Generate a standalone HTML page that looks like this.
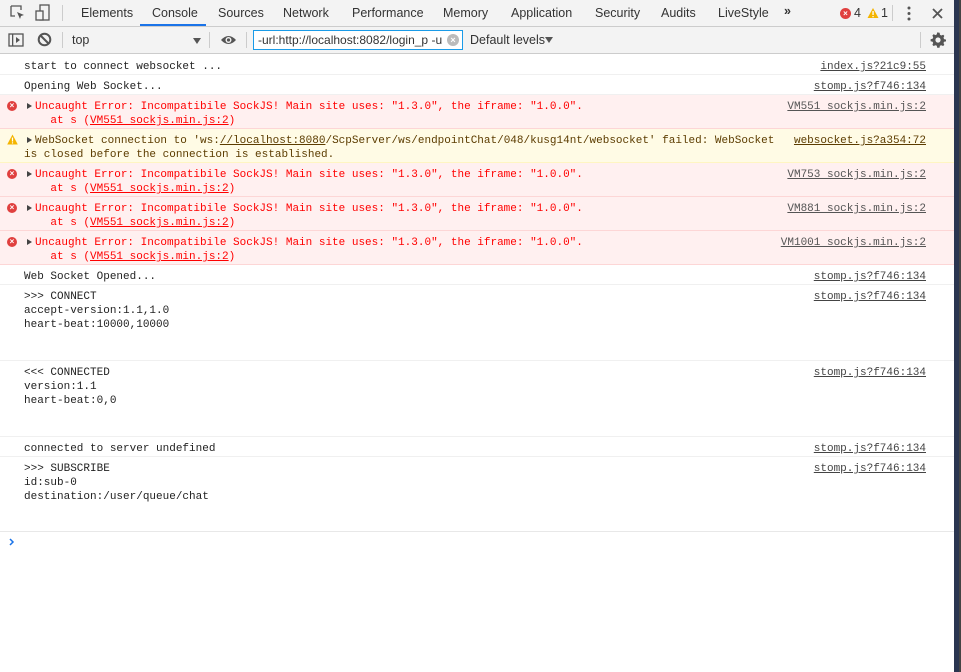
<!DOCTYPE html>
<html><head><style>
*{margin:0;padding:0;box-sizing:border-box}
body{width:961px;height:672px;overflow:hidden;background:#fff;position:relative;font-family:"Liberation Sans",sans-serif}
.tb1{position:absolute;left:0;top:0;width:954px;height:27px;background:#f3f3f3;border-bottom:1px solid #ccc}
.tb2{position:absolute;left:0;top:27px;width:954px;height:27px;background:#f3f3f3;border-bottom:1px solid #ccc}
.t{position:absolute;top:6px;font-size:12.5px;color:#333}
.ul{position:absolute;left:140px;top:24px;width:66px;height:2px;background:#1a73e8}
.sep{position:absolute;width:1px;background:#ccc}
.row{position:absolute;left:0;width:954px;font-family:"Liberation Mono",monospace;font-size:11px;line-height:14px;color:#222;border-bottom:1px solid #f0f0f0;padding:5px 0 0 24px;white-space:pre}
.src{position:absolute;right:28px;top:5px;text-decoration:underline;color:#444}
.err{background:#fff0f0;color:#f00;border-bottom:1px solid #fdd6d6}
.err .src{color:#555}
.warn{background:#fffbe5;color:#5c3c00;border-bottom:1px solid #fff5c2}
.ic{position:absolute;left:7px;top:6px;width:10px;height:10px;border-radius:50%;background:#e0403f;color:#fff;font:bold 8px/10px "Liberation Sans";text-align:center}
.tri{display:inline-block;width:0;height:0;border-left:5px solid #444;border-top:3.5px solid transparent;border-bottom:3.5px solid transparent;margin-left:3px;margin-right:3px}
.u{text-decoration:underline}
</style></head><body>
<div class="tb1">
<svg style="position:absolute;left:10px;top:5px" width="16" height="16"><path d="M1 1h10v4M1 1v10h4" fill="none" stroke="#555" stroke-width="1.3"/><path d="M7 7l7 3-3 1-1 3z" fill="#555"/></svg>
<svg style="position:absolute;left:35px;top:4px" width="16" height="18"><rect x="5" y="1" width="9" height="15" fill="none" stroke="#555" stroke-width="1.3"/><rect x="1" y="7" width="7" height="9" fill="#f3f3f3" stroke="#555" stroke-width="1.3"/></svg>
<div class="sep" style="left:62px;top:5px;height:16px"></div>
<span class="t" style="left:81px">Elements</span>
<span class="t" style="left:152px">Console</span>
<span class="t" style="left:218px">Sources</span>
<span class="t" style="left:283px">Network</span>
<span class="t" style="left:352px">Performance</span>
<span class="t" style="left:443px">Memory</span>
<span class="t" style="left:511px">Application</span>
<span class="t" style="left:595px">Security</span>
<span class="t" style="left:661px">Audits</span>
<span class="t" style="left:718px">LiveStyle</span>
<span class="t" style="left:784px;font-weight:bold;top:4px">»</span>
<div class="ul"></div>
<div style="position:absolute;left:840px;top:8px;width:11px;height:11px;border-radius:50%;background:#e0403f;color:#fff;font:bold 8px/11px sans-serif;text-align:center">×</div>
<span class="t" style="left:854px">4</span>
<svg style="position:absolute;left:867px;top:7px" width="12" height="12"><path d="M6 1L11.5 11H.5z" fill="#f4b400"/><rect x="5.4" y="4" width="1.3" height="4" fill="#fff"/><rect x="5.4" y="9" width="1.3" height="1.2" fill="#fff"/></svg>
<span class="t" style="left:881px">1</span>
<div class="sep" style="left:892px;top:5px;height:16px"></div>
<svg style="position:absolute;left:907px;top:6px" width="4" height="16"><circle cx="2" cy="2" r="1.5" fill="#555"/><circle cx="2" cy="7.5" r="1.5" fill="#555"/><circle cx="2" cy="13" r="1.5" fill="#555"/></svg>
<svg style="position:absolute;left:932px;top:8px" width="11" height="11"><path d="M1 1l9 9M10 1l-9 9" stroke="#555" stroke-width="1.8"/></svg>
</div>
<div class="tb2">
<svg style="position:absolute;left:8px;top:6px" width="16" height="14"><rect x="1" y="1" width="14" height="12" fill="none" stroke="#555" stroke-width="1.3"/><rect x="4" y="1" width="1.3" height="12" fill="#555"/><path d="M8 4l4 3-4 3z" fill="#555"/></svg>
<svg style="position:absolute;left:37px;top:5px" width="15" height="15"><circle cx="7.5" cy="7.5" r="5.8" fill="none" stroke="#555" stroke-width="2"/><path d="M3.5 3.5l8 8" stroke="#555" stroke-width="2"/></svg>
<div class="sep" style="left:62px;top:5px;height:16px"></div>
<span class="t" style="left:72px;top:6px">top</span>
<div style="position:absolute;left:193px;top:11px;border-top:6px solid #555;border-left:4px solid transparent;border-right:4px solid transparent"></div>
<div class="sep" style="left:209px;top:5px;height:16px"></div>
<svg style="position:absolute;left:220px;top:7px" width="17" height="12"><path d="M1 6Q8.5-2 16 6Q8.5 14 1 6z" fill="#555"/><circle cx="8.5" cy="6" r="3" fill="#f3f3f3"/><circle cx="8.5" cy="6" r="1.6" fill="#555"/></svg>
<div class="sep" style="left:246px;top:5px;height:16px"></div>
<div style="position:absolute;left:253px;top:3px;width:210px;height:20px;border:1px solid #1a9be8;background:#fff;overflow:hidden">
<span style="position:absolute;left:4px;top:2px;font-size:12px;color:#333;white-space:nowrap">-url:http://localhost:8082/login_p -u</span>
<div style="position:absolute;right:3px;top:3px;width:12px;height:12px;border-radius:50%;background:#bbb;color:#fff;font:bold 9px/12px sans-serif;text-align:center">×</div>
</div>
<span class="t" style="left:470px;top:6px">Default levels</span>
<div style="position:absolute;left:545px;top:10px;border-top:6px solid #555;border-left:4px solid transparent;border-right:4px solid transparent"></div>
<div class="sep" style="left:920px;top:5px;height:16px"></div>
<svg style="position:absolute;left:930px;top:5px" width="16" height="16" viewBox="0 0 16 16"><path d="M8 0.5l1.6.3.4 2 1.3.7 1.9-.8 1.1 1.2-.8 1.9.6 1.3 2 .5v1.7l-2 .4-.6 1.3.8 1.9-1.2 1.1-1.9-.8-1.3.6-.4 2H7.2l-.4-2-1.3-.6-1.900.8-1.2-1.1.8-1.9-.6-1.3-2-.4V7.2l2-.5.6-1.3-.8-1.9 1.2-1.2 1.9.8 1.3-.7.4-2z" fill="#555"/><circle cx="8" cy="8" r="2.6" fill="#f3f3f3"/></svg>
</div>

<div class="row" style="top:54px;height:21px;padding-top:6px">start to connect websocket ...<span class="src" style="top:6px">index.js?21c9:55</span></div>
<div class="row" style="top:75px;height:20px">Opening Web Socket...<span class="src">stomp.js?f746:134</span></div>
<div class="row err" style="top:95px;height:34px"><div class="ic">×</div><span class="tri"></span>Uncaught Error: Incompatibile SockJS! Main site uses: "1.3.0", the iframe: "1.0.0".
    at s (<span class="u">VM551 sockjs.min.js:2</span>)<span class="src">VM551 sockjs.min.js:2</span></div>
<div class="row warn" style="top:129px;height:34px"><svg style="position:absolute;left:7px;top:5px" width="11" height="11"><path d="M5.5 .5L10.8 10.5H.2z" fill="#f4b400"/><rect x="4.9" y="3.5" width="1.2" height="4" fill="#fff"/><rect x="4.9" y="8.3" width="1.2" height="1.2" fill="#fff"/></svg><span class="tri"></span>WebSocket connection to 'ws:<span class="u">//localhost:8080</span>/ScpServer/ws/endpointChat/048/kusg14nt/websocket' failed: WebSocket
is closed before the connection is established.<span class="src" style="color:#5c3c00">websocket.js?a354:72</span></div>
<div class="row err" style="top:163px;height:34px"><div class="ic">×</div><span class="tri"></span>Uncaught Error: Incompatibile SockJS! Main site uses: "1.3.0", the iframe: "1.0.0".
    at s (<span class="u">VM551 sockjs.min.js:2</span>)<span class="src">VM753 sockjs.min.js:2</span></div>
<div class="row err" style="top:197px;height:34px"><div class="ic">×</div><span class="tri"></span>Uncaught Error: Incompatibile SockJS! Main site uses: "1.3.0", the iframe: "1.0.0".
    at s (<span class="u">VM551 sockjs.min.js:2</span>)<span class="src">VM881 sockjs.min.js:2</span></div>
<div class="row err" style="top:231px;height:34px"><div class="ic">×</div><span class="tri"></span>Uncaught Error: Incompatibile SockJS! Main site uses: "1.3.0", the iframe: "1.0.0".
    at s (<span class="u">VM551 sockjs.min.js:2</span>)<span class="src">VM1001 sockjs.min.js:2</span></div>
<div class="row" style="top:265px;height:20px">Web Socket Opened...<span class="src">stomp.js?f746:134</span></div>
<div class="row" style="top:285px;height:76px">&gt;&gt;&gt; CONNECT
accept-version:1.1,1.0
heart-beat:10000,10000<span class="src">stomp.js?f746:134</span></div>
<div class="row" style="top:361px;height:76px">&lt;&lt;&lt; CONNECTED
version:1.1
heart-beat:0,0<span class="src">stomp.js?f746:134</span></div>
<div class="row" style="top:437px;height:20px">connected to server undefined<span class="src">stomp.js?f746:134</span></div>
<div class="row" style="top:457px;height:75px;border-bottom:1px solid #e8e8e8">&gt;&gt;&gt; SUBSCRIBE
id:sub-0
destination:/user/queue/chat<span class="src">stomp.js?f746:134</span></div>
<svg style="position:absolute;left:9px;top:538px" width="6" height="8"><path d="M1 1l3 3-3 3" fill="none" stroke="#1a73e8" stroke-width="1.5"/></svg>
<div style="position:absolute;left:954px;top:0;width:7px;height:672px;background:#2a3550;border-right:2px solid #444"></div>
</body></html>
